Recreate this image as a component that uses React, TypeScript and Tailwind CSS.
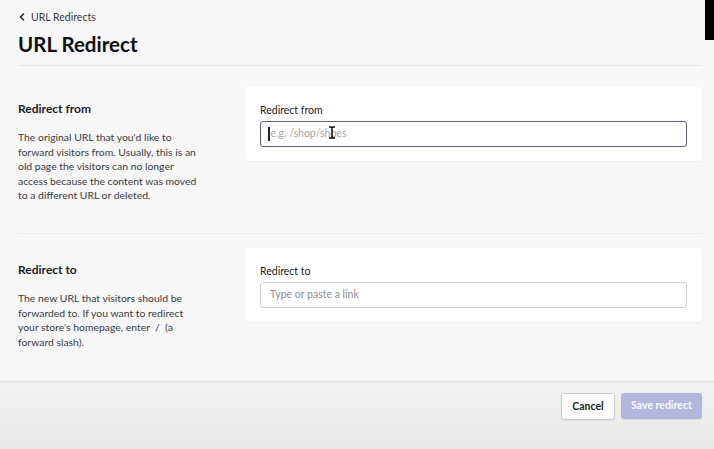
import { ChevronLeft } from "lucide-react";

const font = { fontFamily: 'Lato, "Noto Sans", sans-serif' };

interface SectionProps {
  title: string;
  children: React.ReactNode;
  label: string;
  placeholder: string;
  focused?: boolean;
}

// text-select pointer sitting over the focused field
function IBeam() {
  return (
    <svg width="8" height="13" viewBox="0 0 8 13" className="absolute left-[67px] top-[4px]">
      <path d="M1 1h2.2L4 1.8 4.8 1H7M4 1.8v9.4M1 12h2.2l.8-.8.8.8H7" fill="none" stroke="#111" strokeWidth="1.5" />
    </svg>
  );
}

function Section({ title, children, label, placeholder, focused }: SectionProps) {
  return (
    <div className="flex gap-[18px]">
      <div className="w-[209px] shrink-0 pr-[24px] pt-[14px]">
        <h2 className="text-[12px] font-bold leading-[16px] text-[#1b1b1f]">{title}</h2>
        <p className="mt-[13px] text-[10.4px] leading-[14.6px] text-[#3a3b40]">{children}</p>
      </div>
      <div className="h-[74px] flex-1 rounded-[4px] bg-white px-[15px] pt-[16px] shadow-[0_1px_2px_rgba(0,0,0,0.06)]">
        <label className="block text-[10.5px] leading-[14px] text-[#1f2024]">{label}</label>
        {focused ? (
          <div className="relative mt-[4px] flex h-[26px] items-center rounded-[3px] border-[1.5px] border-[#5b5e86] bg-white pl-[7px] text-[10.5px] text-[#a2a3a8]">
            <span className="mr-[1px] h-[14px] w-[1.5px] bg-[#222]" />
            <span>e.g. /shop/shoes</span>
            <IBeam />
          </div>
        ) : (
          <div className="mt-[4px] flex h-[26px] items-center rounded-[3px] border border-[#cfd0d4] bg-white pl-[9px] text-[10.5px] text-[#8c8d92]">
            {placeholder}
          </div>
        )}
      </div>
    </div>
  );
}

export default function App() {
  return (
    <div style={font} className="relative flex h-[449px] w-[714px] flex-col overflow-hidden bg-[#f7f7f8]">
      <div className="absolute right-0 top-0 h-[40px] w-[9px] bg-black" />

      <div className="px-[18px] pr-[12px]">
        <a className="mt-[10px] flex items-center gap-[3px] text-[10.5px] leading-[14px] text-[#3b3c42]">
          <ChevronLeft size={12} strokeWidth={3} className="-ml-[2px] text-[#222]" />
          URL Redirects
        </a>
        <h1 className="mt-[8px] text-[20.5px] font-bold leading-[24px] text-[#0f0f12]">URL Redirect</h1>
        <div className="mt-[9px] h-px bg-[#e6e6ea]" />

        <div className="mt-[21px] h-[115px]">
          <Section title="Redirect from" label="Redirect from" placeholder="e.g. /shop/shoes" focused>
            The original URL that you'd like to forward visitors from. Usually, this is an old page the visitors can no longer access because the content was moved to a different URL or deleted.
          </Section>
        </div>

        <div className="mt-[31px] h-px bg-[#ececef]" />

        <div className="mt-[14px]">
          <Section title="Redirect to" label="Redirect to" placeholder="Type or paste a link">
            The new URL that visitors should be forwarded to. If you want to redirect your store's homepage, enter&nbsp; /&nbsp; (a forward slash).
          </Section>
        </div>
      </div>

      <div className="mt-auto flex h-[68px] items-start justify-end gap-[6px] border-t border-[#e2e2e4] bg-gradient-to-b from-[#f1f1f2] to-[#e9e9ea] pr-[12px] pt-[11px]">
        <button className="h-[27px] w-[54px] rounded-[3px] border border-[#c9cacd] bg-white text-[10.5px] font-bold text-[#222] shadow-[0_1px_1px_rgba(0,0,0,0.08)]">
          Cancel
        </button>
        <button className="h-[26px] w-[81px] rounded-[3px] bg-[#b3b7dd] text-[10.5px] font-bold text-white/90 shadow-[0_1px_1px_rgba(0,0,0,0.08)]">
          Save redirect
        </button>
      </div>
    </div>
  );
}
